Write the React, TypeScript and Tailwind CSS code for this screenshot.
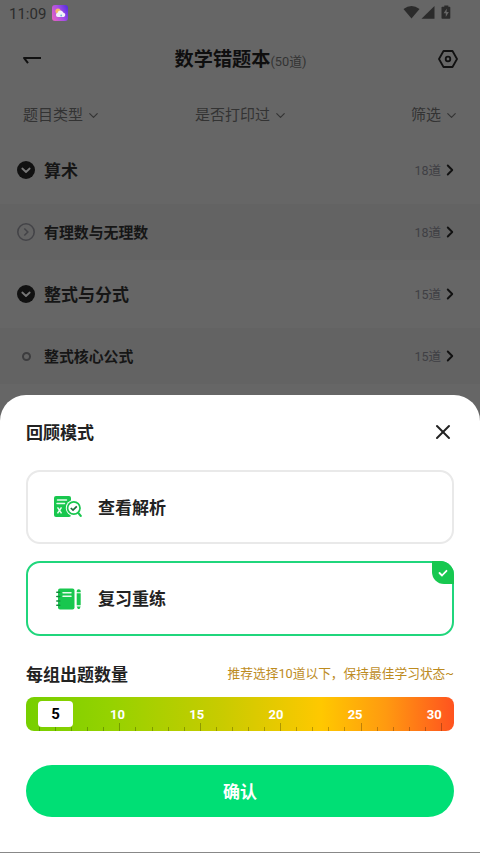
import { ChevronDown, ChevronRight, X } from 'lucide-react'
import clsx from 'clsx'

const filters = ['题目类型', '是否打印过', '筛选'] as const

const chapters = [
  { title: '算术', count: 18, level: 'parent', icon: 'open' },
  { title: '有理数与无理数', count: 18, level: 'child', icon: 'closed' },
  { title: '整式与分式', count: 15, level: 'parent', icon: 'open' },
  { title: '整式核心公式', count: 15, level: 'child', icon: 'leaf' },
] as const

const groupSizes = [10, 15, 20, 25, 30] as const
const ticks = Array.from({ length: 26 }, (_, index) => index)

function StatusBar() {
  return (
    <div className="flex h-[27px] items-center justify-between pr-[29px] pl-[9px]">
      <div className="flex items-center gap-[6px]">
        <span className="w-[37px] pt-px text-[15px] leading-none text-[#2c2c2c]">11:09</span>
        <svg className="-mt-px h-4 w-4" viewBox="0 0 16 16">
          <defs>
            <linearGradient id="weather" x1="0" x2="1" y1="0.7" y2="0.2">
              <stop offset="0" stopColor="#e060c4" />
              <stop offset="0.5" stopColor="#a850e6" />
              <stop offset="1" stopColor="#5a2fe0" />
            </linearGradient>
          </defs>
          <rect fill="url(#weather)" height="16" rx="3" width="16" />
          <circle cx="6" cy="6" fill="#f5b96b" r="2.6" />
          <path d="M5.800 12a2.200 2.200 0 0 1-.2-4.300 3 3 0 0 1 5.600-.3 2.400 2.400 0 0 1 .6 4.600z" fill="#f3f2fa" />
          <circle cx="9.200" cy="10.500" fill="#6fb5dc" r="0.900" />
        </svg>
      </div>
      <svg className="-mt-px h-4 w-[48px]" fill="#2b2b2b" viewBox="0 0 48 16">
        <path d="M0.500 4Q8.500-2 16.500 4L8.500 13.500Z" />
        <path d="M18.500 13.800L31.500 1V13.800Z" />
        <path d="M39.300 1.800h2V0.500h4v1.300h1.200q.8 0 .8.800v10.400q0 .8-.8.800h-7.200q-.8 0-.8-.8V2.600q0-.8.8-.8z" />
        <path d="M43.800 3.500L40.600 8.300H42.800V12L45.800 7H43.600Z" fill="#666" />
      </svg>
    </div>
  )
}

function Header() {
  return (
    <header className="flex h-[64px] items-center justify-between px-[22px]">
      <svg className="h-5 w-5" fill="none" stroke="#111" strokeLinejoin="round" strokeWidth="2" viewBox="0 0 20 20">
        <path d="M19 8.900H2l4 5.300" />
      </svg>
      <h1 className="flex items-baseline pt-[3px] pl-px text-[#0f0f0f]">
        <span className="text-[19.200px] font-bold">数学错题本</span>
        <span className="text-[12.800px] text-[#333]">(50道)</span>
      </h1>
      <svg className="h-5 w-5" fill="none" stroke="#111" strokeLinejoin="round" strokeWidth="1.800" viewBox="0 0 20 20">
        <path d="M5.500 2h9L19 10l-4.500 8h-9L1 10z" />
        <circle cx="10" cy="10" r="2.300" />
      </svg>
    </header>
  )
}

function ChapterIcon({ icon }: { icon: 'open' | 'closed' | 'leaf' }) {
  if (icon === 'leaf') {
    return (
      <span className="flex w-[18px] justify-center">
        <span className="h-[9px] w-[9px] rounded-full border-2 border-[#3c3c3e]" />
      </span>
    )
  }
  if (icon === 'closed') {
    return (
      <svg className="h-[18px] w-[18px]" fill="none" stroke="#444448" strokeWidth="1.600" viewBox="0 0 18 18">
        <circle cx="9" cy="9" r="8.200" />
        <path d="M7.300 5.500l3.500 3.500-3.500 3.500" />
      </svg>
    )
  }
  return (
    <svg className="h-[18px] w-[18px]" viewBox="0 0 18 18">
      <circle cx="9" cy="9" fill="#111" r="9" />
      <path d="M5.300 7.500L9 11l3.700-3.500" fill="none" stroke="#777" strokeLinecap="round" strokeLinejoin="round" strokeWidth="1.800" />
    </svg>
  )
}

function ReviewIcon() {
  return (
    <svg className="h-[22px] w-[29px]" viewBox="0 0 29 22">
      <rect fill="#18c74e" height="21" rx="2" width="17" x="1" y="0" />
      <path d="M4.500 4h9M4 7.500h7.500" stroke="#e8fbee" strokeLinecap="round" strokeWidth="1.500" />
      <path d="M4.500 11.300l4 6M8.500 11.300l-4 6" stroke="#e8fbee" strokeWidth="1.500" />
      <circle cx="20.800" cy="12" fill="#fff" r="8" />
      <circle cx="20.800" cy="12" fill="#fff" r="6.200" stroke="#18c74e" strokeWidth="1.700" />
      <path d="M25.500 17.100l2.200 2.800" stroke="#18c74e" strokeLinecap="round" strokeWidth="2.200" />
      <path d="M17.800 12l2.200 2.100 3.800-3.800" fill="none" stroke="#1d6b3a" strokeWidth="1.700" />
    </svg>
  )
}

function PracticeIcon() {
  return (
    <svg className="h-[22px] w-[29px]" viewBox="0 0 29 22">
      <rect fill="#18c74e" height="21" rx="2" width="16.500" x="5" y="0.500" />
      <path d="M3.800 4.300h3M3.800 8.600h3M3.800 12.900h3M3.800 17.200h3" stroke="#128c3c" strokeLinecap="round" strokeWidth="1.500" />
      <path d="M10 4.800h8M10 8.300h8" stroke="#e8fbee" strokeLinecap="round" strokeWidth="1.500" />
      <path d="M23.700 3q0-1.800 2-1.800t2 1.800v1.200h-4zM23.700 5.300h4v12h-4zM23.700 18.400h4l-1.200 2.600h-1.600z" fill="#18c74e" />
    </svg>
  )
}

function GroupSizeSlider() {
  return (
    <div className="relative mt-[10px] flex h-[34px] items-center overflow-hidden rounded-lg bg-[linear-gradient(90deg,#76cf00_0%,#96d200_20%,#c9cb00_46%,#ffc800_69%,#ff9a10_84%,#ff531f_100%)] pl-[12px] text-[13px] font-bold text-white">
      <div className="absolute right-[12px] bottom-0 left-[13px] flex items-end justify-between">
        {ticks.map((tick) => (
          <span className={clsx('w-px bg-black/25', tick % 5 === 0 && tick > 0 ? 'h-[8px]' : 'h-[4px]')} key={tick} />
        ))}
      </div>
      <span className="relative flex h-[26px] w-[35px] items-center justify-center rounded bg-white pt-px text-[15px] text-black">5</span>
      {groupSizes.map((size) => (
        <span className="relative w-[79.200px] pt-[2px] text-right nth-[3]:w-[52px]" key={size}>
          {size}
        </span>
      ))}
    </div>
  )
}

export default function App() {
  return (
    <main className="flex h-[853px] w-[480px] flex-col overflow-hidden bg-[#666] font-[Roboto,'Noto_Sans_CJK_SC',sans-serif]">
      <StatusBar />
      <Header />
      <nav className="flex h-[45px] items-center pt-[3px] pr-[21px] pl-[23px] text-[15px] text-[#333]">
        {filters.map((filter) => (
          <button className="flex items-center gap-[3px] first:w-[172px] nth-[2]:flex-1" key={filter} type="button">
            {filter}
            <ChevronDown className="h-[15px] w-[15px]" strokeWidth={1.8} />
          </button>
        ))}
      </nav>
      <ul className="h-[259px] shrink-0 overflow-hidden">
        {chapters.map((chapter) => (
          <li
            className={clsx(
              'flex items-center pr-[21px] pl-[17px]',
              chapter.level === 'parent' ? 'h-[68px] text-[17px]' : 'h-[56px] bg-[#636363] text-[14.900px]',
            )}
            key={chapter.title}
          >
            <ChapterIcon icon={chapter.icon} />
            <span className={clsx('ml-[9px] flex-1 font-bold text-[#161616]', chapter.level === 'parent' ? 'pt-[3px]' : 'pt-[2px]')}>
              {chapter.title}
            </span>
            <span className="pt-[2px] text-[12.500px] text-[#3f3f44]">{chapter.count}道</span>
            <ChevronRight className="h-[18px] w-[18px] text-[#111]" strokeWidth={2.5} />
          </li>
        ))}
      </ul>

      <section className="h-[457px] shrink-0 rounded-t-[26px] bg-white px-[26px] text-[#222]">
        <div className="flex h-[75px] items-center justify-between">
          <h2 className="pt-[3px] text-[17px] font-bold">回顾模式</h2>
          <X className="-mt-px -mr-px h-6 w-6" strokeWidth={2} />
        </div>
        <button className="flex h-[74px] w-full items-center gap-4 rounded-[14px] border-2 border-[#e9e9e9] pl-[25px]" type="button">
          <ReviewIcon />
          <span className="pt-[3px] text-[17px] font-bold">查看解析</span>
        </button>
        <button className="relative mt-[17px] flex h-[75px] w-full items-center gap-4 rounded-[14px] border-2 border-[#20d67c] pl-[25px]" type="button">
          <PracticeIcon />
          <span className="pt-[3px] text-[17px] font-bold">复习重练</span>
          <span className="absolute -top-[2px] -right-[2px] flex h-[23px] w-[22px] items-center justify-center rounded-tr-[14px] rounded-bl-[12px] bg-[#17c850]">
            <svg className="h-2 w-[10px]" fill="none" stroke="#fff" strokeLinecap="round" strokeLinejoin="round" strokeWidth="1.800" viewBox="0 0 10 8">
              <path d="M1.500 4l2.500 2.500L8.500 1.800" />
            </svg>
          </span>
        </button>
        <div className="mt-[25px] flex h-[26px] items-center justify-between">
          <h2 className="pt-[3px] text-[17px] font-bold">每组出题数量</h2>
          <p className="text-[12.730px] text-[#bd8b1e]">推荐选择10道以下，保持最佳学习状态~</p>
        </div>
        <GroupSizeSlider />
        <button className="mt-[34px] h-[52px] w-full rounded-full bg-[#00df75] pt-[3px] text-[17px] font-bold text-white" type="button">
          确认
        </button>
      </section>
      <div className="h-px shrink-0 bg-[#888]" />
    </main>
  )
}
